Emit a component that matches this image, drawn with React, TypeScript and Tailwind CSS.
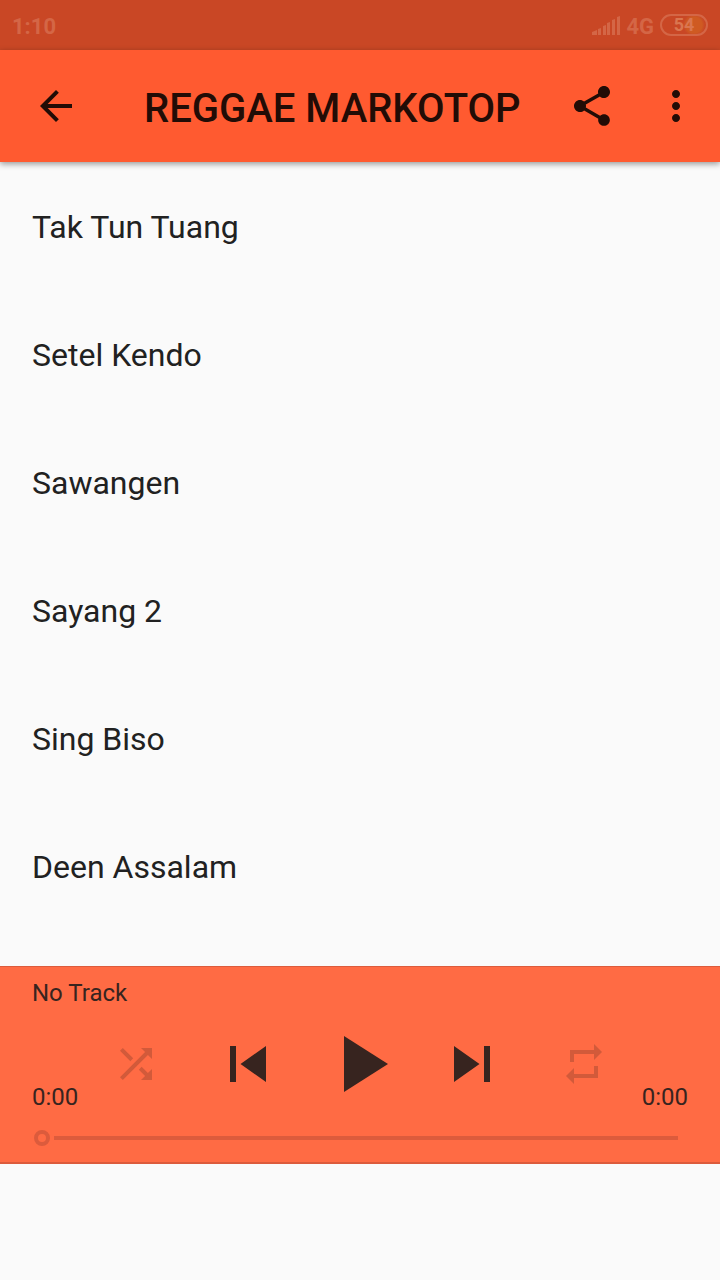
import type { ReactNode } from "react";

const TRACKS = [
  "Tak Tun Tuang",
  "Setel Kendo",
  "Sawangen",
  "Sayang 2",
  "Sing Biso",
  "Deen Assalam",
];

const ICONS = {
  back: "M20 11H7.83l5.59-5.59L12 4l-8 8 8 8 1.41-1.41L7.83 13H20v-2z",
  share:
    "M18 16.08c-.76 0-1.44.3-1.96.77L8.91 12.7c.05-.23.09-.46.09-.7s-.04-.47-.09-.7l7.05-4.11c.54.5 1.25.81 2.04.81 1.66 0 3-1.34 3-3s-1.34-3-3-3-3 1.34-3 3c0 .24.04.47.09.7L8.04 9.81C7.5 9.31 6.79 9 6 9c-1.66 0-3 1.34-3 3s1.34 3 3 3c.79 0 1.5-.31 2.04-.81l7.12 4.16c-.05.21-.08.43-.08.65 0 1.61 1.31 2.92 2.92 2.92s2.92-1.31 2.92-2.92-1.31-2.92-2.92-2.92z",
  more: "M12 8c1.1 0 2-.9 2-2s-.9-2-2-2-2 .9-2 2 .9 2 2 2zm0 2c-1.1 0-2 .9-2 2s.9 2 2 2 2-.9 2-2-.9-2-2-2zm0 6c-1.1 0-2 .9-2 2s.9 2 2 2 2-.9 2-2-.9-2-2-2z",
  shuffle:
    "M10.59 9.17L5.41 4 4 5.41l5.17 5.17 1.42-1.41zM14.5 4l2.04 2.04L4 18.59 5.41 20 17.96 7.46 20 9.5V4h-5.5zm.33 9.41l-1.41 1.41 3.13 3.13L14.5 20H20v-5.5l-2.04 2.04-3.13-3.13z",
  previous: "M6 6h2v12H6zm3.5 6l8.5 6V6z",
  play: "M8 5v14l11-7z",
  next: "M6 18l8.5-6L6 6v12zM16 6v12h2V6h-2z",
  repeat: "M7 7h10v3l4-4-4-4v3H5v6h2V7zm10 10H7v-3l-4 4 4 4v-3h12v-6h-2v4z",
};

function Icon({ name, className }: { name: keyof typeof ICONS; className: string }) {
  return (
    <svg viewBox="0 0 24 24" fill="currentColor" className={className} aria-hidden="true">
      <path d={ICONS[name]} />
    </svg>
  );
}

function ControlButton({ label, children }: { label: string; children: ReactNode }) {
  return (
    <button type="button" aria-label={label} className="flex h-24 w-28 items-center justify-center">
      {children}
    </button>
  );
}

function StatusBar() {
  return (
    <div className="flex h-[50px] items-center justify-between bg-[#c94725] px-3 text-[22px] font-bold text-[#d46646]">
      <span className="pt-0.5">1:10</span>
      <div className="flex items-center gap-1.5">
        <svg viewBox="0 0 28 19" className="h-[19px] w-7" fill="currentColor" aria-hidden="true">
          <path d="M0 16l5-2v5H0zM6 13l3-1v7H6zM11 10l3-1v10h-3zM15 7l3-1v13h-3zM20 4l3-1v16h-3zM25 1l3-1v19h-3z" />
        </svg>
        <span className="pt-0.5">4G</span>
        <span className="flex h-[22px] w-12 items-center justify-center rounded-full border-2 border-[#d46646] bg-[radial-gradient(circle_at_32px_9px,#cf5a22_8px,transparent_11px)] text-lg text-[#da7650]">
          54
        </span>
      </div>
    </div>
  );
}

function AppBar() {
  return (
    <header className="relative flex h-28 items-center bg-[#ff5a30] pr-2 text-[#220c06] shadow-[0_2px_6px_rgba(0,0,0,0.4)]">
      <button type="button" aria-label="Back" className="flex h-28 w-28 items-center justify-center">
        <Icon name="back" className="size-12" />
      </button>
      <h1 className="min-w-0 flex-1 truncate pt-1.5 pl-8 text-[40px] leading-12 font-medium">
        REGGAE MARKOTOP
      </h1>
      <button type="button" aria-label="Share" className="flex h-24 w-24 items-center justify-center">
        <Icon name="share" className="size-12" />
      </button>
      <button type="button" aria-label="More options" className="flex h-24 w-18 items-center justify-center">
        <Icon name="more" className="size-12" />
      </button>
    </header>
  );
}

function Player() {
  return (
    <section aria-label="Player" className="border-t border-b-2 border-[#dc5b3c] bg-[#ff6b44] text-[#37241f]">
      <p className="px-8 pt-[11px] text-2xl leading-[30px]">No Track</p>
      <div className="mt-2 flex items-end justify-between px-8">
        <span className="w-12 text-2xl leading-[30px]">0:00</span>
        <div className="flex items-center">
          <ControlButton label="Shuffle">
            <Icon name="shuffle" className="size-12 text-[#d25a3a]" />
          </ControlButton>
          <ControlButton label="Previous">
            <Icon name="previous" className="size-18" />
          </ControlButton>
          <ControlButton label="Play">
            <Icon name="play" className="size-24" />
          </ControlButton>
          <ControlButton label="Next">
            <Icon name="next" className="size-18" />
          </ControlButton>
          <ControlButton label="Repeat">
            <Icon name="repeat" className="size-12 text-[#d25a3a]" />
          </ControlButton>
        </div>
        <span className="w-12 text-right text-2xl leading-[30px]">0:00</span>
      </div>
      <div className="flex h-[50px] items-center pt-0.5 pr-[42px] pl-[34px]">
        <input
          type="range"
          aria-label="Seek"
          min={0}
          max={100}
          defaultValue={0}
          disabled
          className="h-4 w-full appearance-none bg-transparent [&::-webkit-slider-runnable-track]:h-1 [&::-webkit-slider-runnable-track]:bg-[linear-gradient(to_right,transparent_20px,#dc5b3c_20px)] [&::-webkit-slider-thumb]:-mt-1.5 [&::-webkit-slider-thumb]:size-4 [&::-webkit-slider-thumb]:appearance-none [&::-webkit-slider-thumb]:rounded-full [&::-webkit-slider-thumb]:border-4 [&::-webkit-slider-thumb]:border-[#dc5b3c]"
        />
      </div>
    </section>
  );
}

export default function App() {
  return (
    <div className="flex min-h-screen flex-col bg-[#fafafa] font-[Roboto,sans-serif]">
      <StatusBar />
      <AppBar />
      <ul className="flex-1 text-[32px] text-[#212121]">
        {TRACKS.map((track) => (
          <li key={track} className="flex h-32 items-center px-8 pt-0.5">
            {track}
          </li>
        ))}
      </ul>
      <Player />
      {/* banner slot */}
      <div className="h-29" />
    </div>
  );
}
